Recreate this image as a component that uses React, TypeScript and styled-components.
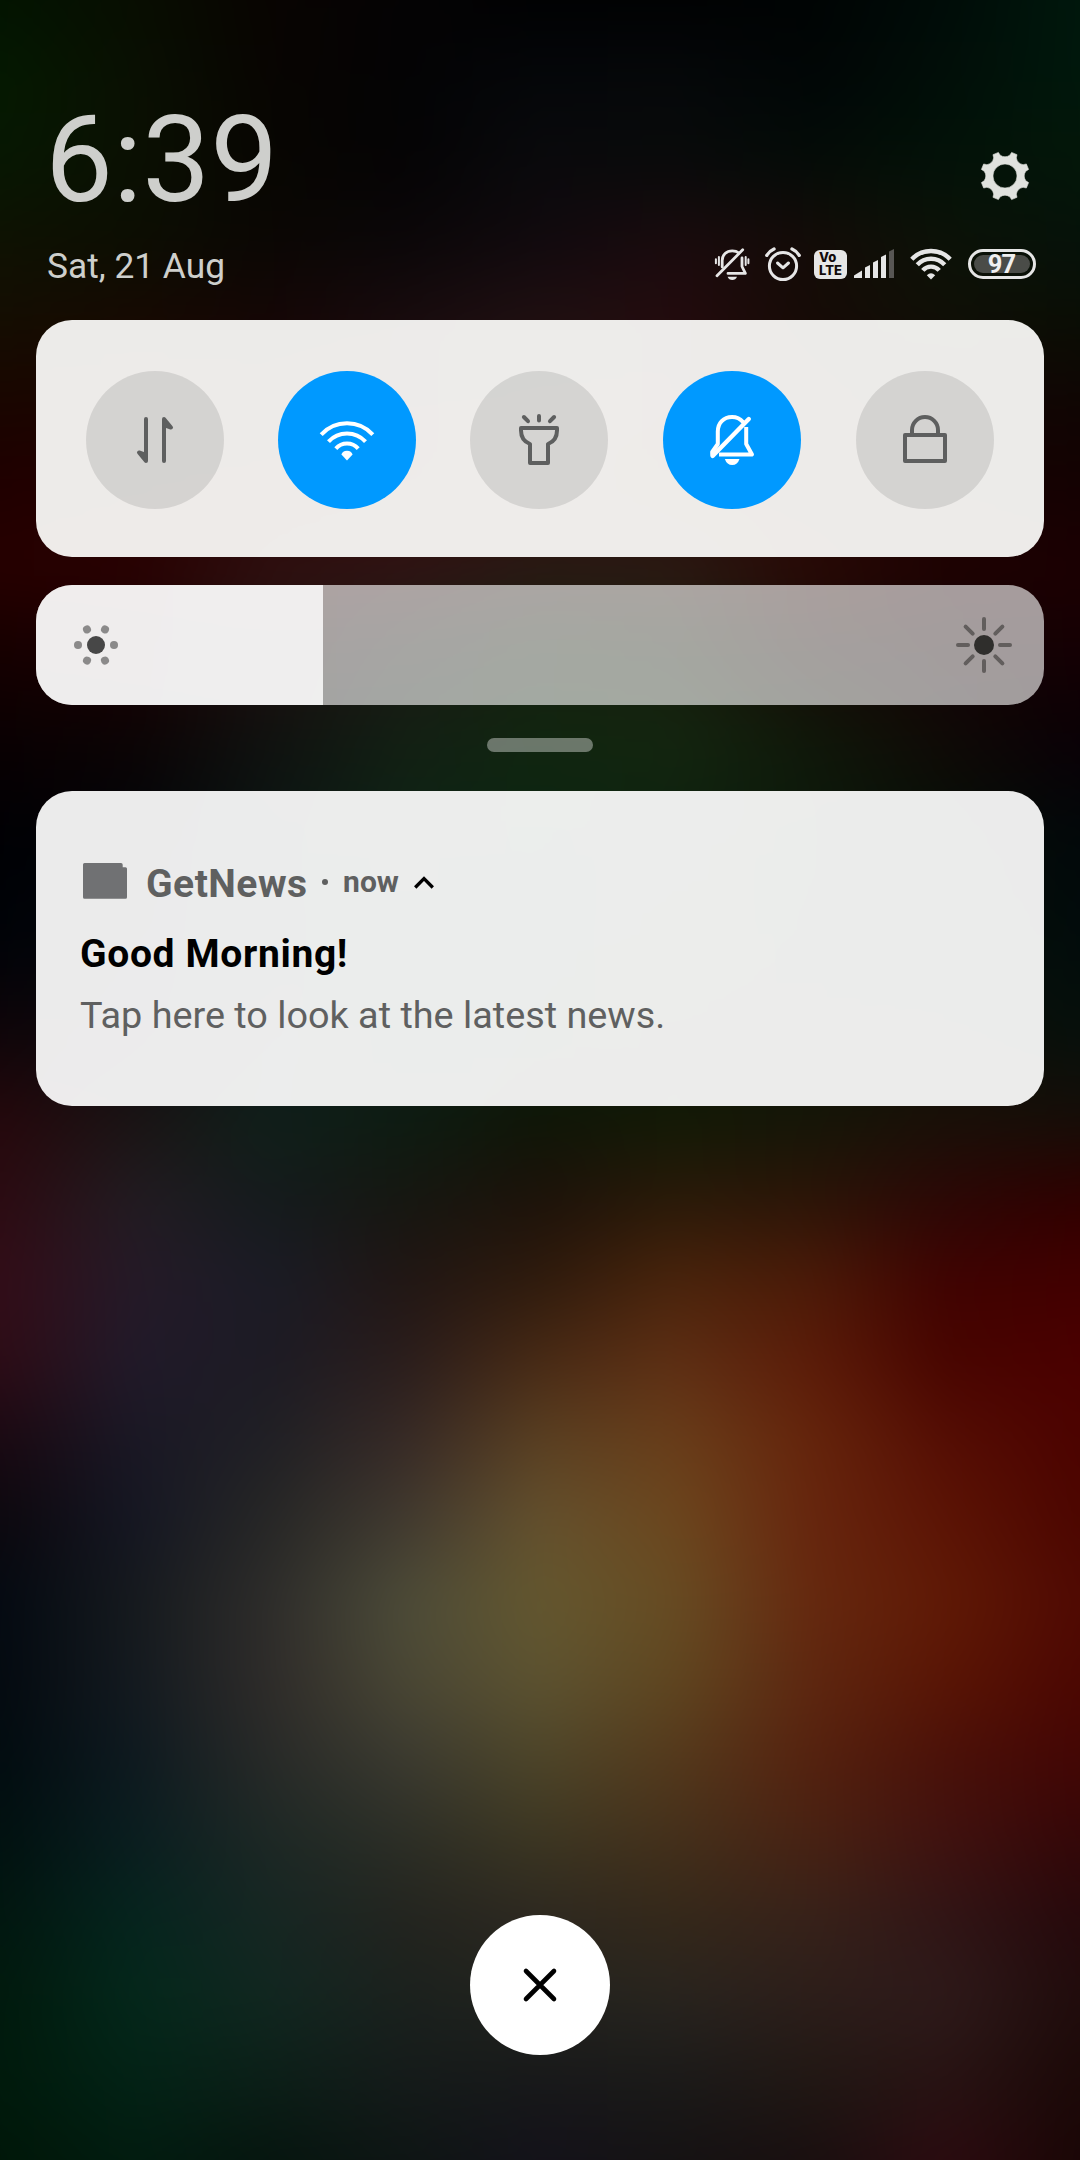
import React from 'react';
import styled, { createGlobalStyle } from 'styled-components';

const GlobalStyle = createGlobalStyle`
  *, *::before, *::after { box-sizing: border-box; }
  html, body { margin: 0; padding: 0; background: #000; }
  body { font-family: Roboto, "Noto Sans", sans-serif; }
  svg { display: block; flex: none; }
  button { border: 0; padding: 0; font: inherit; }
`;

/* Blurred wallpaper: colour rows sampled across the screen, blended vertically. */
type ColourRow = { y: number; colours: string };

const BLEED = 60;

const wallpaper: ColourRow[] = [
  { y: -60, colours: '031400 080e02 090402 050304 010203 010203 000404 000c08 00180d' },
  { y: 0, colours: '031400 080e02 090402 050304 010203 010203 000404 000c08 00180d' },
  { y: 80, colours: '051a02 0a1002 080502 040405 05070a 06080a 010606 010f09 00180c' },
  { y: 160, colours: '071802 0b1003 080602 050405 0a0a0d 090b0b 040c08 031208 041709' },
  { y: 240, colours: '0f1203 0c0e03 0b0704 0b0709 110a0e 1a0b0e 140c08 0c1208 06120a' },
  { y: 320, colours: '150e02 170a02 150606 180c0e 201012 240c0e 160b06 101006 0a0e05' },
  { y: 400, colours: '1a0600 1c0602 1c0606 240c0e 261012 260c0e 1c0a06 140806 100604' },
  { y: 480, colours: '200000 240202 280808 300c0c 2c1010 280c08 200806 180404 140202' },
  { y: 570, colours: '280000 2a0202 301010 301414 2a1a14 2c1a14 2a0a06 200202 1c0002' },
  { y: 640, colours: '180000 1c0204 201010 1c1a14 182010 181c0c 180a06 140406 160004' },
  { y: 740, colours: '0a0002 0c0405 101210 132014 112610 142610 10180a 100a06 0a0006' },
  { y: 840, colours: '000004 02060a 0c1614 0e2416 0c2612 0e220e 0c1a0c 061008 02080a' },
  { y: 940, colours: '000308 04080c 0c1616 0c2016 0c200e 0e1e0c 0c180a 081008 020c0c' },
  { y: 1030, colours: '0e0509 0e0a10 0e181a 0c1e18 0c1a0c 0e180a 0e1608 0e1008 06100c' },
  { y: 1120, colours: '26080c 1a1414 10201a 0e1c12 0f1607 131a06 151607 1a1008 160e08' },
  { y: 1200, colours: '2c0b12 221c22 151b1d 161711 1d120a 2a1a09 2c1508 2c0806 300000' },
  { y: 1280, colours: '330d18 251a28 1b1c26 211614 2f1b0d 4a240c 4c1b08 400302 420000' },
  { y: 1360, colours: '2e0c16 211a2a 1d1b24 2a1d1c 482a15 5e2f14 5c1c09 480500 4b0000' },
  { y: 1440, colours: '1a0912 1a1825 202025 372a26 5a4022 693e1a 65250c 550e04 4c0300' },
  { y: 1520, colours: '0c080e 151723 272726 413a30 64512e 6c471e 67260e 5c1405 4c0600' },
  { y: 1600, colours: '040a12 161a1e 2e2d2b 4d4c39 64582f 674c23 66290f 601a06 500a03' },
  { y: 1680, colours: '040a10 141a20 2f2c2a 4a4735 5d5331 5f4620 5e2710 5a1505 4c0702' },
  { y: 1760, colours: '020c10 0e1a20 282a28 3b3a30 4d4529 54391c 55220f 4a1109 430605' },
  { y: 1840, colours: '011110 0a1e20 1d2825 2c2e26 3c3622 44301b 482213 401210 340708' },
  { y: 1920, colours: '021710 05251e 162623 23241f 2d2820 34281a 37221a 301516 26090c' },
  { y: 2000, colours: '011a0d 04281b 112720 1b211e 22231e 28241f 2c1e1a 2e1a1a 200c0c' },
  { y: 2080, colours: '001a0c 032316 0c1f18 151b1a 18191a 1b1a19 211814 281313 1c0908' },
  { y: 2160, colours: '001709 021c10 06150f 0e1514 14121a 151213 190f10 2c0b10 1a0606' },
  { y: 2220, colours: '001709 021c10 06150f 0e1514 14121a 151213 190f10 2c0b10 1a0606' },
];

const rowGradient = (colours: string) =>
  `linear-gradient(90deg, ${colours
    .split(' ')
    .map((c, i) => `#${c} ${BLEED + i * 135}px`)
    .join(', ')})`;

const Screen = styled.main`
  position: relative;
  width: 1080px;
  height: 2160px;
  overflow: hidden;
  display: flex;
  flex-direction: column;
  background: #000;
`;

const Wallpaper = styled.div`
  position: absolute;
  inset: -${BLEED}px;
  display: flex;
  flex-direction: column;
  filter: blur(24px);
`;

const Band = styled.div<{ $height: number; $from: string; $to: string }>`
  height: ${(p) => p.$height}px;
  flex: none;
  background: ${(p) => rowGradient(p.$from)};

  &::after {
    content: '';
    display: block;
    height: 100%;
    background: ${(p) => rowGradient(p.$to)};
    mask-image: linear-gradient(180deg, transparent, #000);
  }
`;

const Content = styled.div`
  position: relative;
  flex: 1;
  display: flex;
  flex-direction: column;
  padding: 100px 36px 105px;
`;

const Header = styled.header`
  display: flex;
  flex-direction: column;
  gap: 25px;
  height: 220px;
  padding: 0 8px 0 9px;
`;

const HeaderRow = styled.div`
  display: flex;
  justify-content: space-between;
`;

const Clock = styled.time`
  font-size: 121px;
  line-height: 120px;
  color: #cecfcc;
`;

const DateLabel = styled.span`
  padding-left: 2px;
  font-size: 35.3px;
  line-height: 42px;
  color: #cecfcc;
`;

const SettingsButton = styled.button`
  background: none;
  height: 52px;
  margin: 50px 5px 0 0;
`;

const StatusIcons = styled.div`
  display: flex;
  height: 40px;
  color: #e6e6e6;
`;

const VolteBadge = styled.div`
  display: flex;
  flex-direction: column;
  width: 33px;
  height: 29px;
  margin: 5px 6px 0 12px;
  padding: 1px 0 0 5px;
  border-radius: 6px;
  background: #e6e6e6;
  color: #120a0a;
  font: 800 13px/13px Inter, Roboto, sans-serif;
`;

const BatteryShell = styled.div`
  display: flex;
  width: 68px;
  height: 30px;
  margin: 4px 0 0 16px;
  padding: 3px;
  border: 3px solid #e6e6e6;
  border-radius: 15px;
`;

const BatteryLevel = styled.div`
  flex: 1;
  display: flex;
  align-items: center;
  justify-content: center;
  padding-right: 1px;
  border-radius: 9px;
  background: #4a4c48;
  color: #f0f0f0;
  font-weight: 700;
  font-size: 25.5px;
  line-height: 18px;
  letter-spacing: -1px;
`;

const Toggles = styled.section`
  display: grid;
  grid-template-columns: 192px 192px 193px 193px 138px;
  height: 237px;
  padding: 51px 50px 0;
  border-radius: 36px;
  background: rgba(255, 255, 253, 0.922);
`;

const Toggle = styled.button<{ $on?: boolean }>`
  width: 138px;
  height: 138px;
  border-radius: 50%;
  background: ${(p) => (p.$on ? '#0099ff' : 'rgba(0, 0, 0, 0.1)')};
  color: ${(p) => (p.$on ? '#ffffff' : '#5e5f5f')};
`;

const Brightness = styled.section`
  display: flex;
  align-items: center;
  justify-content: space-between;
  height: 120px;
  margin-top: 28px;
  padding-right: 30px;
  border-radius: 36px;
  overflow: hidden;
  background: rgba(255, 255, 255, 0.61);
`;

const BrightnessFill = styled.div`
  display: flex;
  align-items: center;
  width: 287px;
  height: 100%;
  padding-left: 30px;
  background: rgba(255, 255, 255, 0.82);
`;

const DragHandle = styled.div`
  align-self: center;
  width: 106px;
  height: 14px;
  margin: 33px 0 39px;
  border-radius: 7px;
  background: rgba(255, 255, 255, 0.38);
`;

const Notification = styled.article`
  height: 315px;
  padding: 70px 44px 0;
  border-radius: 36px;
  background: rgba(255, 255, 255, 0.922);
`;

const NotificationHeader = styled.div`
  display: flex;
  height: 46px;
  color: #5f6060;
  font-weight: 700;
`;

const AppName = styled.span`
  margin-left: 16px;
  font-size: 39px;
  line-height: 46px;
  letter-spacing: 0.5px;
`;

const Dot = styled.span`
  width: 6px;
  height: 6px;
  margin: 18px 15px 0 14.5px;
  border-radius: 50%;
  background: currentColor;
`;

const When = styled.span`
  font-size: 30px;
  line-height: 42px;
  margin-right: 12px;
`;

const Title = styled.h2`
  margin: 23.5px 0 0;
  font-size: 39px;
  line-height: 46px;
  font-weight: 700;
  letter-spacing: 0.65px;
  color: #000;
`;

const Body = styled.p`
  margin: 15px 0 0;
  font-size: 37.8px;
  line-height: 46px;
  color: #5f6060;
`;

const CloseButton = styled.button`
  display: grid;
  place-items: center;
  width: 140px;
  height: 140px;
  margin: auto auto 0;
  border-radius: 50%;
  background: #fff;
`;

const gearOutline = (() => {
  const notch = [
    [-6.6, -23.6],
    [-4.8, -20.8],
    [0, -17.6],
    [4.8, -20.8],
    [6.6, -23.6],
  ];
  let d = '';
  for (let k = 0; k < 8; k++) {
    const a = (k * Math.PI) / 4;
    const p = notch.map(
      ([x, y]) =>
        `${(x * Math.cos(a) - y * Math.sin(a)).toFixed(2)} ${(x * Math.sin(a) + y * Math.cos(a)).toFixed(2)}`,
    );
    d += `${k ? 'L' : 'M'}${p[0]}L${p[1]}Q${p[2]} ${p[3]}L${p[4]}`;
  }
  return d + 'ZM12 0A12 12 0 1 0 -12 0A12 12 0 1 0 12 0Z';
})();

const GearIcon = () => (
  <svg width="52" height="52" viewBox="-26 -26 52 52">
    <path d={gearOutline} fill="#e0e2de" fillRule="evenodd" stroke="#e0e2de" strokeWidth="0.6" strokeLinejoin="round" />
  </svg>
);

const MutedStatusIcon = () => (
  <svg width="36" height="40" viewBox="0 0 36 40" fill="none" stroke="currentColor" strokeWidth="2.8" strokeLinecap="round" strokeLinejoin="round">
    <path d="M8.2 22V15.5C8.2 9.5 12.5 5.8 18.3 5.8C21 5.8 23.2 6.6 25 8" />
    <path d="M28 13V21.5L31.4 28.4H14" />
    <path d="M3 30.7L28.7 4.8" />
    <path d="M13.6 31.8H23Q21.6 35 18.3 35Q15 35 13.6 31.8Z" fill="currentColor" stroke="none" />
    <path d="M1.9 14.2V18.2M4.9 12V20M31.7 12V20M34.4 14.2V18.2" strokeWidth="2" />
  </svg>
);

const AlarmSvg = styled.svg`
  margin-left: 14px;
`;

const AlarmIcon = () => (
  <AlarmSvg width="38" height="40" viewBox="0 0 38 40" fill="none" stroke="currentColor" strokeWidth="3" strokeLinecap="round" strokeLinejoin="round">
    <circle cx="19" cy="21" r="13.6" />
    <path d="M13.5 18L19 22.8L24.5 18" />
    <path d="M2.8 10.3Q5.4 6 10 4M28 4Q32.6 6 35.2 10.3" strokeWidth="3.4" />
  </AlarmSvg>
);

const SignalIcon = () => (
  <svg width="42" height="40" viewBox="0 0 42 40" fill="currentColor">
    <path d="M1 33V30.5L9 25.5V33Z" />
    <path d="M12 33V22.5L17 20V33Z" />
    <path d="M20 33V17.5L25 15V33Z" />
    <path d="M28 33V12L33 9.5V33Z" />
    <path d="M36 33V6.5L41 4V33Z" fill="#585654" />
  </svg>
);

const WifiStatusSvg = styled.svg`
  margin-left: 15px;
`;

const WifiStatusIcon = () => (
  <WifiStatusSvg width="42" height="40" viewBox="0 0 42 40" fill="none" stroke="currentColor" strokeWidth="4.4">
    <path d="M1.8 14.2A26.5 26.5 0 0 1 40.2 14.2" />
    <path d="M7.3 19.8A18.6 18.6 0 0 1 34.7 19.8" />
    <path d="M12.8 25.4A10.8 10.8 0 0 1 29.2 25.4" />
    <path d="M21 34.5L16.8 30.2Q21 26.4 25.2 30.2Z" fill="currentColor" stroke="none" />
  </WifiStatusSvg>
);

const ToggleGlyph = ({ children }: { children: React.ReactNode }) => (
  <svg width="138" height="138" viewBox="0 0 138 138" fill="none" stroke="currentColor" strokeWidth="4" strokeLinecap="round" strokeLinejoin="round">
    {children}
  </svg>
);

const DataGlyph = () => (
  <ToggleGlyph>
    <path d="M60 48V90L53 81.5L60 84Z" fill="currentColor" />
    <path d="M78 90V48L85 56.5L78 54Z" fill="currentColor" />
  </ToggleGlyph>
);

const WifiGlyph = () => (
  <ToggleGlyph>
    <g strokeLinecap="butt">
      <path d="M43.2 63.6A35 35 0 0 1 94.8 63.6" />
      <path d="M50.5 70.6A25 25 0 0 1 87.5 70.6" />
      <path d="M57.8 77.6A15 15 0 0 1 80.2 77.6" />
    </g>
    <path d="M69 89.5L63.4 83.6Q64.5 79.8 69 79.8Q73.5 79.8 74.6 83.6Z" fill="currentColor" stroke="none" />
  </ToggleGlyph>
);

const TorchGlyph = () => (
  <ToggleGlyph>
    <path d="M69 45V49.5M53.9 46L58 50.2M84.1 46L80 50.2" />
    <path d="M51 57H87V59.5C87 66.5 83.3 71 78 73V92H60V73C54.7 71 51 66.5 51 59.5Z" />
  </ToggleGlyph>
);

const BellOffGlyph = () => (
  <ToggleGlyph>
    <path d="M49.2 83.5V81L54.8 73V60.5C54.8 52 60.5 46 69 46C74 46 77.5 48 80 51" />
    <path d="M83.2 56V73L89 83.5H56" strokeLinecap="butt" />
    <path d="M49.6 85L85.8 48" strokeWidth="4.4" />
    <path d="M61.8 88H76.5Q74.5 94 69.2 94Q64 94 61.8 88Z" fill="currentColor" stroke="none" />
  </ToggleGlyph>
);

const LockGlyph = () => (
  <ToggleGlyph>
    <path d="M49 64H89V90H49Z" />
    <path d="M56 64V59A13 13 0 0 1 82 59V64" />
  </ToggleGlyph>
);

const LowBrightnessIcon = () => (
  <svg width="60" height="60" viewBox="-30 -30 60 60">
    <circle r="9" fill="#474747" />
    {[0, 60, 120, 180, 240, 300].map((a) => (
      <circle key={a} cx="18" r="4" fill="#8b8a8a" transform={`rotate(${a})`} />
    ))}
  </svg>
);

const HighBrightnessIcon = () => (
  <svg width="60" height="60" viewBox="-30 -30 60 60">
    <circle r="10" fill="#2f2e2c" />
    {[0, 45, 90, 135, 180, 225, 270, 315].map((a) => (
      <path key={a} d="M16 0H26" stroke="#625e5d" strokeWidth="4" strokeLinecap="round" transform={`rotate(${a})`} />
    ))}
  </svg>
);

const NewsIcon = () => (
  <svg width="50" height="46" viewBox="0 0 50 46">
    <path d="M4.500 2H41Q42.700 2 42.700 3.700V6.300H45.500Q47 6.300 47 7.800V36.200Q47 37.700 45.500 37.700H4.500Q3 37.700 3 36.200V3.500Q3 2 4.500 2Z" fill="#707173" />
  </svg>
);

const ChevronUpIcon = () => (
  <svg width="26" height="46" viewBox="0 0 26 46">
    <path d="M4.200 26.500L13 17.500L21.800 26.500" fill="none" stroke="#000" strokeWidth="3.300" />
  </svg>
);

const CrossIcon = () => (
  <svg width="40" height="40" viewBox="0 0 40 40">
    <path d="M6 6L34 34M34 6L6 34" fill="none" stroke="#000" strokeWidth="4.600" strokeLinecap="round" />
  </svg>
);

export default function App() {
  return (
    <Screen>
      <GlobalStyle />
      <Wallpaper>
        {wallpaper.slice(0, -1).map((row, i) => (
          <Band key={row.y} $height={wallpaper[i + 1].y - row.y} $from={row.colours} $to={wallpaper[i + 1].colours} />
        ))}
      </Wallpaper>
      <Content>
        <Header>
          <HeaderRow>
            <Clock>6:39</Clock>
            <SettingsButton>
              <GearIcon />
            </SettingsButton>
          </HeaderRow>
          <HeaderRow>
            <DateLabel>Sat, 21 Aug</DateLabel>
            <StatusIcons>
              <MutedStatusIcon />
              <AlarmIcon />
              <VolteBadge>
                <span>Vo</span>
                <span>LTE</span>
              </VolteBadge>
              <SignalIcon />
              <WifiStatusIcon />
              <BatteryShell>
                <BatteryLevel>97</BatteryLevel>
              </BatteryShell>
            </StatusIcons>
          </HeaderRow>
        </Header>
        <Toggles>
          <Toggle><DataGlyph /></Toggle>
          <Toggle $on><WifiGlyph /></Toggle>
          <Toggle><TorchGlyph /></Toggle>
          <Toggle $on><BellOffGlyph /></Toggle>
          <Toggle><LockGlyph /></Toggle>
        </Toggles>
        <Brightness>
          <BrightnessFill>
            <LowBrightnessIcon />
          </BrightnessFill>
          <HighBrightnessIcon />
        </Brightness>
        <DragHandle />
        <Notification>
          <NotificationHeader>
            <NewsIcon />
            <AppName>GetNews</AppName>
            <Dot />
            <When>now</When>
            <ChevronUpIcon />
          </NotificationHeader>
          <Title>Good Morning!</Title>
          <Body>Tap here to look at the latest news.</Body>
        </Notification>
        <CloseButton>
          <CrossIcon />
        </CloseButton>
      </Content>
    </Screen>
  );
}
